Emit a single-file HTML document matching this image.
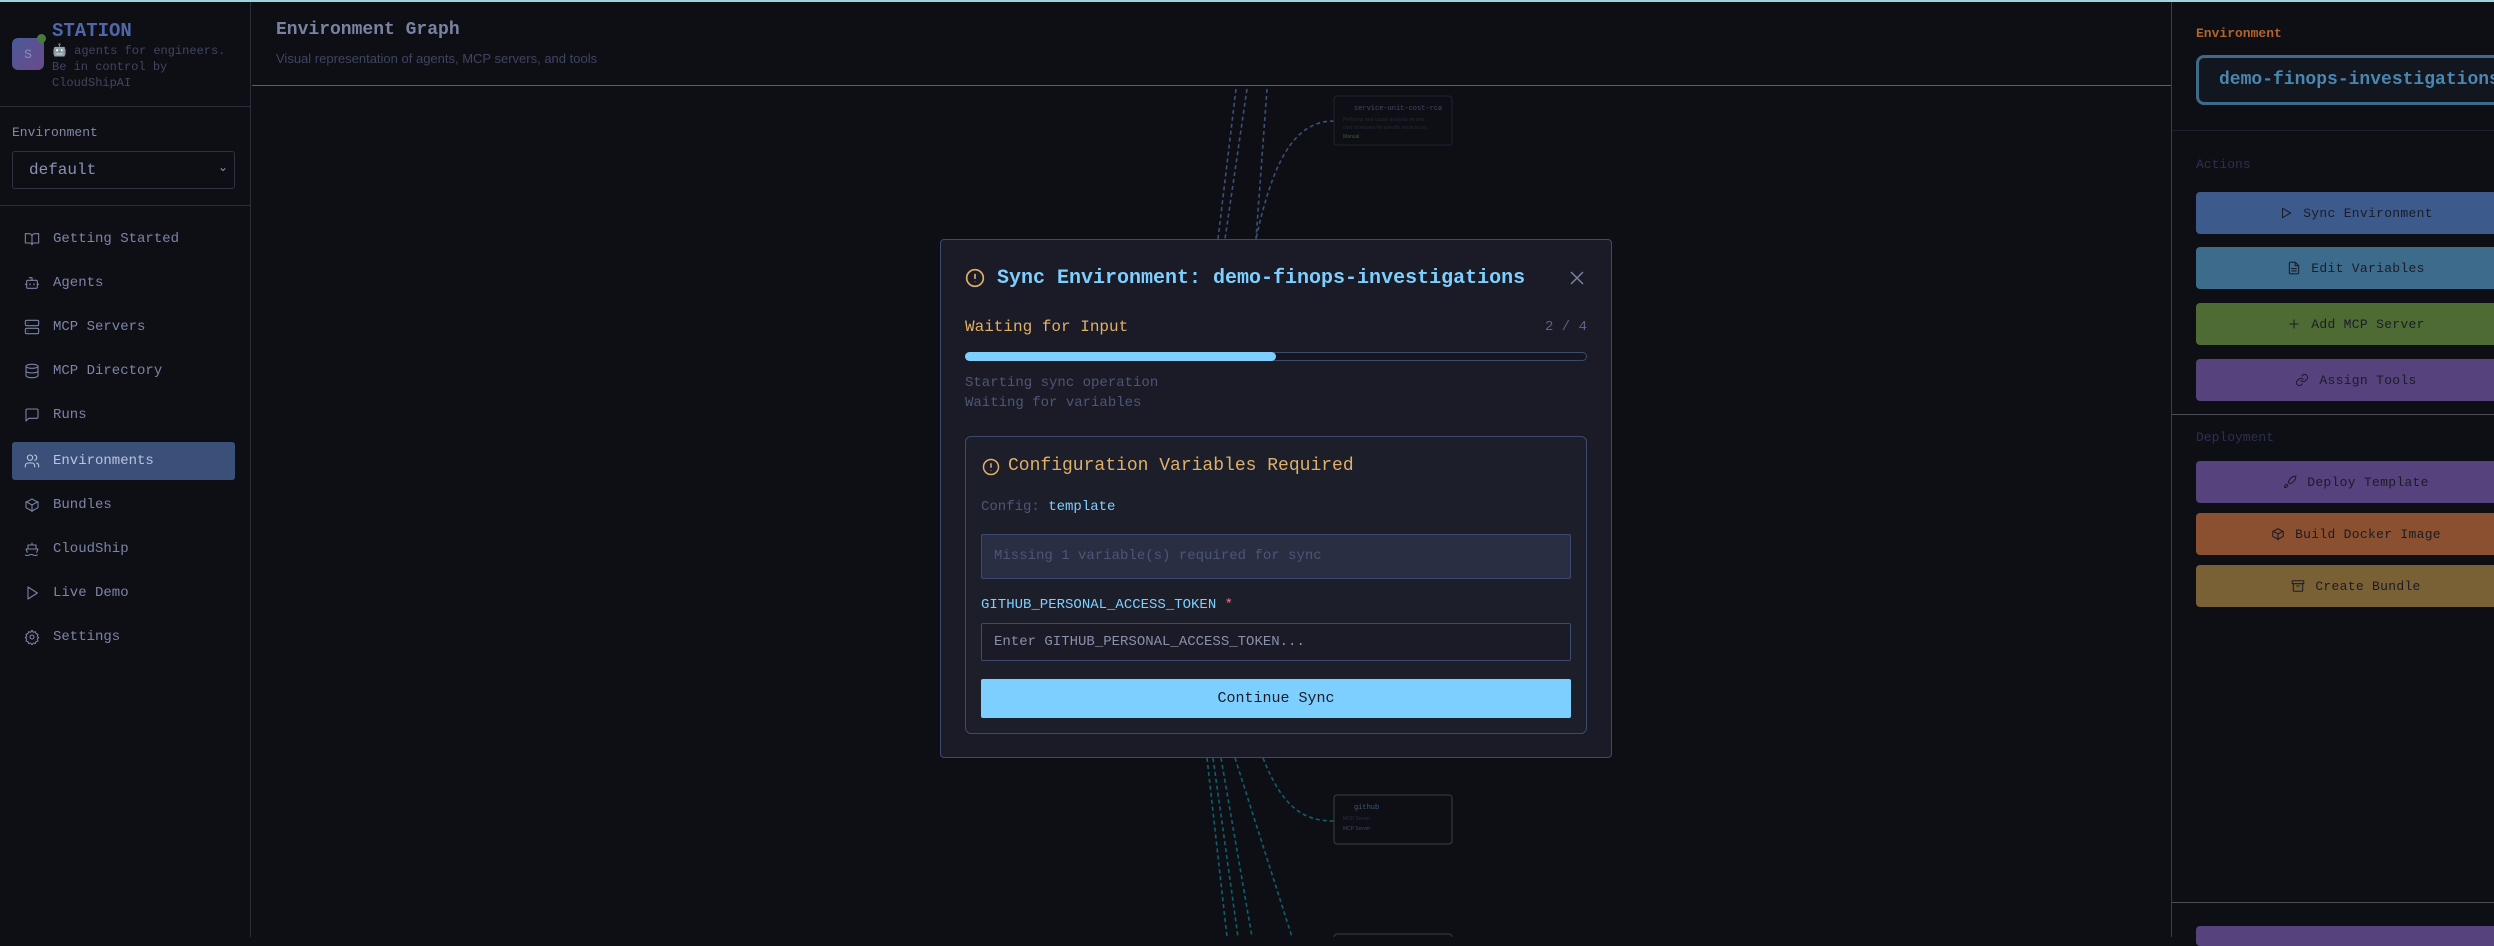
<!DOCTYPE html>
<html><head><meta charset="utf-8"><style>
*{box-sizing:border-box;margin:0;padding:0}
body{width:2494px;height:937px;background:#0e0f15;font-family:"Liberation Mono",monospace;overflow:hidden;position:relative;color:#8a94b8}
.abs{position:absolute}
#top{left:0;top:0;width:2494px;height:2px;background:#9fd3e0}
#side{left:0;top:2px;width:251px;height:935px;border-right:1px solid #2a2d3a;background:#0e0f15}
.nav{position:absolute;left:12px;width:223px;height:38px;display:flex;align-items:center;font-size:14px;color:#7c84a8}
.nav svg{margin-left:12px;margin-right:13px;width:16px;height:16px;fill:none;stroke:#7c84a8;stroke-width:1.6;stroke-linecap:round;stroke-linejoin:round}
.nav.act{background:#3b5078;border-radius:3px;color:#b8c4e0}
.nav.act svg{stroke:#b8c4e0}
.rb{position:absolute;left:2196px;width:320px;height:42px;border-radius:4px;display:flex;align-items:center;justify-content:center;font-size:13px;color:#1a1c28;letter-spacing:0.3px}
.rb svg{width:14px;height:14px;margin-right:10px;fill:none;stroke:#1a1c28;stroke-width:1.8;stroke-linecap:round;stroke-linejoin:round}
.warn{fill:none;stroke:#e0af68;stroke-width:2}
</style></head><body>
<div id="top" class="abs"></div>
<div id="side" class="abs">
 <div class="abs" style="left:12px;top:36px;width:32px;height:32px;border-radius:6px;background:linear-gradient(135deg,#4a5a9a,#6a4a8a);color:#8a90c0;font-size:13px;display:flex;align-items:center;justify-content:center">S</div>
 <div class="abs" style="left:37px;top:32px;width:9px;height:9px;border-radius:50%;background:#4a7a3a"></div>
 <div class="abs" style="left:52px;top:18px;font-size:19px;font-weight:bold;color:#4f66a8">STATION</div>
 <div class="abs" style="left:52px;top:41px;font-size:12px;line-height:16px;color:#3f4560;width:190px">🤖 agents for engineers. Be in control by CloudShipAI</div>
 <div class="abs" style="left:0;top:104px;width:251px;height:1px;background:#2a2d3a"></div>
 <div class="abs" style="left:12px;top:123px;font-size:13px;color:#8088a8">Environment</div>
 <div class="abs" style="left:12px;top:149px;width:223px;height:38px;border:1px solid #2e3242;border-radius:3px;font-size:16px;color:#8a92b8;padding:9px 16px">default<span style="position:absolute;right:6px;top:8px;font-size:12px">⌄</span></div>
 <div class="abs" style="left:0;top:203px;width:251px;height:1px;background:#2a2d3a"></div>
 <div class="nav" style="top:218px"><svg viewBox="0 0 24 24"><path d="M2 4h6a4 4 0 014 4v13a3 3 0 00-3-3H2zM22 4h-6a4 4 0 00-4 4v13a3 3 0 013-3h7z"/></svg>Getting Started</div>
 <div class="nav" style="top:262px"><svg viewBox="0 0 24 24"><rect x="4" y="8" width="16" height="12" rx="2"/><path d="M12 8V4H8M2 14h2M20 14h2M9 13v2M15 13v2"/></svg>Agents</div>
 <div class="nav" style="top:306px"><svg viewBox="0 0 24 24"><rect x="2" y="2" width="20" height="8" rx="2"/><rect x="2" y="14" width="20" height="8" rx="2"/><path d="M6 6h.01M6 18h.01"/></svg>MCP Servers</div>
 <div class="nav" style="top:350px"><svg viewBox="0 0 24 24"><ellipse cx="12" cy="5" rx="9" ry="3"/><path d="M3 5v14a9 3 0 0018 0V5M3 12a9 3 0 0018 0"/></svg>MCP Directory</div>
 <div class="nav" style="top:394px"><svg viewBox="0 0 24 24"><path d="M21 15a2 2 0 01-2 2H7l-4 4V5a2 2 0 012-2h14a2 2 0 012 2z"/></svg>Runs</div>
 <div class="nav act" style="top:440px"><svg viewBox="0 0 24 24"><circle cx="9" cy="7" r="4"/><path d="M16 21v-2a4 4 0 00-4-4H6a4 4 0 00-4 4v2M16 3.1a4 4 0 010 7.8M22 21v-2a4 4 0 00-3-3.9"/></svg>Environments</div>
 <div class="nav" style="top:484px"><svg viewBox="0 0 24 24"><path d="M21 16V8l-9-5-9 5v8l9 5zM3.3 7L12 12l8.7-5M12 22V12"/></svg>Bundles</div>
 <div class="nav" style="top:528px"><svg viewBox="0 0 24 24"><path d="M2 21c2 1 4 1 6 0s4-1 6 0 4 1 6 0M19 17l2-5H3l2 5M6 12V6h12v6M12 3v3"/></svg>CloudShip</div>
 <div class="nav" style="top:572px"><svg viewBox="0 0 24 24"><path d="M6 3l14 9-14 9z"/></svg>Live Demo</div>
 <div class="nav" style="top:616px"><svg viewBox="0 0 24 24"><circle cx="12" cy="12" r="3"/><path d="M12 2l2 3 3-1 1 3 3 1-1 3 2 2-2 2 1 3-3 1-1 3-3-1-2 3-2-3-3 1-1-3-3-1 1-3-2-2 2-2-1-3 3-1 1-3 3 1z"/></svg>Settings</div>
</div>
<div class="abs" style="left:276px;top:20px;font-size:18px;font-weight:bold;color:#7a82a4">Environment Graph</div>
<div class="abs" style="left:276px;top:51px;font-size:13px;color:#3e4462;font-family:'Liberation Sans',sans-serif">Visual representation of agents, MCP servers, and tools</div>
<div class="abs" style="left:252px;top:85px;width:1919px;height:1px;background:#5a5e6e"></div>
<svg class="abs" style="left:252px;top:86px" width="1919" height="851">
 <g fill="none" stroke-width="1.6" stroke-dasharray="4 3">
  <g stroke="#3b4f78"><path d="M984 3 L966 153"/><path d="M995 3 L973 153"/><path d="M1015 3 L1004 153"/><path d="M1082 35 C1040 35 1020 80 1004 153"/></g>
  <g stroke="#0f5f6e"><path d="M955 672 L975 851"/><path d="M961 672 L986 851"/><path d="M969 672 L1000 851"/><path d="M983 672 L1040 851"/><path d="M1011 672 C1030 720 1050 735 1082 735"/></g>
 </g>
 <rect x="1082" y="10" width="118" height="49" rx="3" fill="#0e0f15" stroke="#1e2233"/>
 <text x="1102" y="24" font-size="7" fill="#3a4a6a" font-family="Liberation Mono">service-unit-cost-rca</text>
 <text x="1091" y="35" font-size="5" fill="#252a3a" font-family="Liberation Sans">Performs root cause analysis on unit</text>
 <text x="1091" y="43" font-size="5" fill="#252a3a" font-family="Liberation Sans">cost increases for specific services by...</text>
 <text x="1091" y="52" font-size="5" fill="#3f5a2a" font-family="Liberation Sans">Manual</text>
 <rect x="1082" y="709" width="118" height="49" rx="3" fill="#0e0f15" stroke="#3a3d48"/>
 <text x="1102" y="723" font-size="7" fill="#3a5a7a" font-family="Liberation Mono">github</text>
 <text x="1091" y="734" font-size="5" fill="#2a2e40" font-family="Liberation Sans">MCP Server</text>
 <text x="1091" y="744" font-size="5" fill="#4a3d6a" font-family="Liberation Sans">MCP Server</text>
 <rect x="1082" y="848" width="118" height="10" rx="3" fill="#0e0f15" stroke="#3a3d48"/>
</svg>
<div class="abs" style="left:2171px;top:2px;width:1px;height:935px;background:#3a3d48"></div>
<div class="abs" style="left:2196px;top:26px;font-size:13px;font-weight:bold;color:#b3622e">Environment</div>
<div class="abs" style="left:2196px;top:55px;width:320px;height:50px;border:3px solid #3e6a8a;border-radius:8px;background:#12161f;font-size:18px;font-weight:bold;color:#4a86b0;padding:12px 0 0 20px">demo-finops-investigations</div>
<div class="abs" style="left:2172px;top:130px;width:322px;height:1px;background:#1e2030"></div>
<div class="abs" style="left:2196px;top:157px;font-size:13px;color:#2a3050">Actions</div>
<div class="rb" style="top:192px;background:#3d5a8c"><svg viewBox="0 0 24 24"><path d="M6 4l14 8-14 8z"/></svg>Sync Environment</div>
<div class="rb" style="top:247px;background:#3d6b8c"><svg viewBox="0 0 24 24"><path d="M14 2H6a2 2 0 00-2 2v16a2 2 0 002 2h12a2 2 0 002-2V8zM14 2v6h6M8 13h8M8 17h8"/></svg>Edit Variables</div>
<div class="rb" style="top:303px;background:#4e6b34"><svg viewBox="0 0 24 24"><path d="M12 5v14M5 12h14"/></svg>Add MCP Server</div>
<div class="rb" style="top:359px;background:#56427c"><svg viewBox="0 0 24 24"><path d="M10 13a5 5 0 007.5.5l3-3a5 5 0 00-7-7l-1.7 1.7M14 11a5 5 0 00-7.5-.5l-3 3a5 5 0 007 7l1.7-1.7"/></svg>Assign Tools</div>
<div class="abs" style="left:2172px;top:414px;width:322px;height:1px;background:#4a4d58"></div>
<div class="abs" style="left:2196px;top:430px;font-size:13px;color:#2a3050">Deployment</div>
<div class="rb" style="top:461px;background:#56427c"><svg viewBox="0 0 24 24"><path d="M4.5 16.5c-1.5 1.3-2 5-2 5s3.7-.5 5-2c.7-.8.7-2.1-.1-2.9a2.2 2.2 0 00-2.9-.1zM12 15l-3-3a22 22 0 012-4A13 13 0 0122 2c0 2.7-.8 7.5-6 11a22 22 0 01-4 2z"/></svg>Deploy Template</div>
<div class="rb" style="top:513px;background:#8a5030"><svg viewBox="0 0 24 24"><path d="M21 16V8l-9-5-9 5v8l9 5zM3.3 7L12 12l8.7-5M12 22V12"/></svg>Build Docker Image</div>
<div class="rb" style="top:565px;background:#7a6035"><svg viewBox="0 0 24 24"><rect x="2" y="3" width="20" height="5" rx="1"/><path d="M4 8v11a2 2 0 002 2h12a2 2 0 002-2V8M10 12h4"/></svg>Create Bundle</div>
<div class="abs" style="left:2172px;top:902px;width:322px;height:1px;background:#4a4d58"></div>
<div class="abs" style="left:2196px;top:926px;width:320px;height:20px;border-radius:4px;background:#56427c"></div>
<div class="abs" style="left:940px;top:239px;width:672px;height:519px;background:#1a1b26;border:1px solid #3b4a6e;border-radius:4px">
 <svg class="abs" style="left:24px;top:28px" width="20" height="20" viewBox="0 0 24 24"><circle class="warn" cx="12" cy="12" r="10"/><path class="warn" d="M12 7v6M12 16.5v.5"/></svg>
 <div class="abs" style="left:56px;top:27px;font-size:20px;font-weight:bold;color:#7dcfff">Sync Environment: demo-finops-investigations</div>
 <svg class="abs" style="left:628px;top:30px" width="16" height="16" viewBox="0 0 16 16"><path d="M2 2l12 12M14 2L2 14" stroke="#7a82a0" stroke-width="1.5"/></svg>
 <div class="abs" style="left:24px;top:78px;font-size:16px;color:#e0af68">Waiting for Input</div>
 <div class="abs" style="right:24px;top:79px;font-size:14px;color:#5a6288">2 / 4</div>
 <div class="abs" style="left:24px;top:112px;width:622px;height:9px;border:1px solid #3b4a6e;border-radius:5px;background:#151620"></div>
 <div class="abs" style="left:24px;top:112px;width:311px;height:9px;border-radius:5px;background:#7dcfff"></div>
 <div class="abs" style="left:24px;top:133px;font-size:14px;line-height:20px;color:#4e5678">Starting sync operation<br>Waiting for variables</div>
 <div class="abs" style="left:24px;top:196px;width:622px;height:298px;border:1px solid #3b4a6e;border-radius:6px;background:#1c1e2a">
  <svg class="abs" style="left:16px;top:21px" width="18" height="18" viewBox="0 0 24 24"><circle class="warn" cx="12" cy="12" r="10"/><path class="warn" d="M12 7v6M12 16.5v.5"/></svg>
  <div class="abs" style="left:42px;top:19px;font-size:18px;color:#e0af68">Configuration Variables Required</div>
  <div class="abs" style="left:15px;top:62px;font-size:14px;color:#4e5678">Config: <span style="color:#7dcfff">template</span></div>
  <div class="abs" style="left:15px;top:97px;width:590px;height:45px;border:1px solid #3b4a6e;border-radius:2px;background:#292e42;font-size:14px;color:#4e5678;padding:13px 12px">Missing 1 variable(s) required for sync</div>
  <div class="abs" style="left:15px;top:160px;font-size:14px;color:#7dcfff">GITHUB_PERSONAL_ACCESS_TOKEN <span style="color:#f7768e">*</span></div>
  <div class="abs" style="left:15px;top:186px;width:590px;height:38px;border:1px solid #3b4a6e;border-radius:2px;background:#1a1b26;font-size:14px;color:#8a90ac;padding:10px 12px">Enter GITHUB_PERSONAL_ACCESS_TOKEN...</div>
  <div class="abs" style="left:15px;top:242px;width:590px;height:39px;border-radius:2px;background:#7dcfff;font-size:15px;color:#1a1b26;text-align:center;line-height:39px">Continue Sync</div>
 </div>
</div>
</body></html>
